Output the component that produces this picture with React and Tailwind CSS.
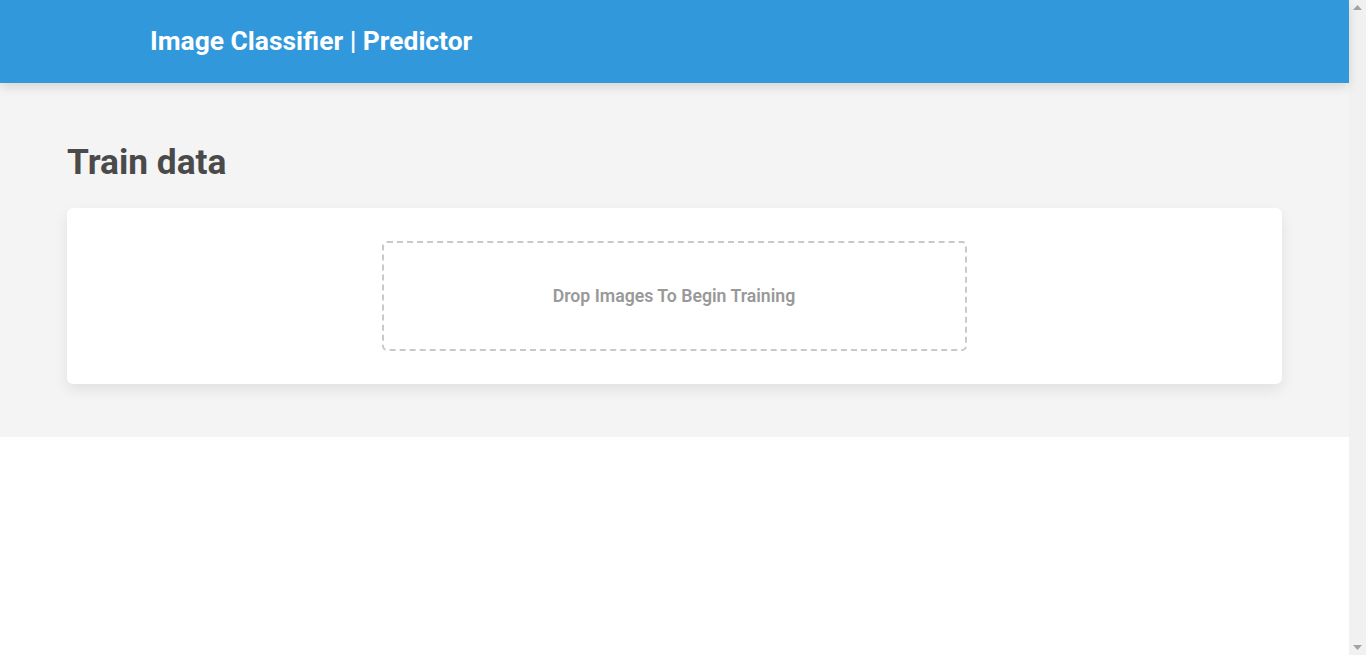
import React from 'react';

const Scrollbar = () => (
  <div className="w-[17px] shrink-0 bg-[#f1f1f1] flex flex-col justify-between items-center py-[5px]">
    <svg width="9" height="5" viewBox="0 0 9 5"><path d="M0 5 L4.5 0 L9 5 Z" fill="#a3a3a3" /></svg>
    <svg width="9" height="5" viewBox="0 0 9 5"><path d="M0 0 L4.5 5 L9 0 Z" fill="#a3a3a3" /></svg>
  </div>
);

export default function App() {
  return (
    <div className="flex h-[655px] overflow-hidden bg-white font-['Roboto',sans-serif]">
      <div className="flex-1 flex flex-col">
        <header className="h-[83px] bg-[#3298dc] flex items-center pl-[150px] shadow-[0_4px_10px_rgba(0,0,0,0.12)] relative z-10">
          <h1 className="text-white font-bold text-[26.4px] leading-none -mt-[1px]">Image Classifier | Predictor</h1>
        </header>
        <section className="bg-[#f4f4f4] h-[354px] px-[67px] pt-[59px]">
          <h2 className="text-[#4a4a4a] font-bold text-[35.3px] leading-[40px]">Train data</h2>
          <div className="mt-[26px] bg-white rounded-[6px] shadow-[0_6px_14px_rgba(0,0,0,0.08)] h-[176px] pb-[1px] flex items-center justify-center">
            <div className="w-[585px] h-[110px] ml-[-1px] border-2 border-dashed border-[#c9c9c9] rounded-[5px] flex items-center justify-center">
              <span className="text-[#999999] font-semibold text-[17.7px] mt-[1px]">Drop Images To Begin Training</span>
            </div>
          </div>
        </section>
      </div>
      <Scrollbar />
    </div>
  );
}
